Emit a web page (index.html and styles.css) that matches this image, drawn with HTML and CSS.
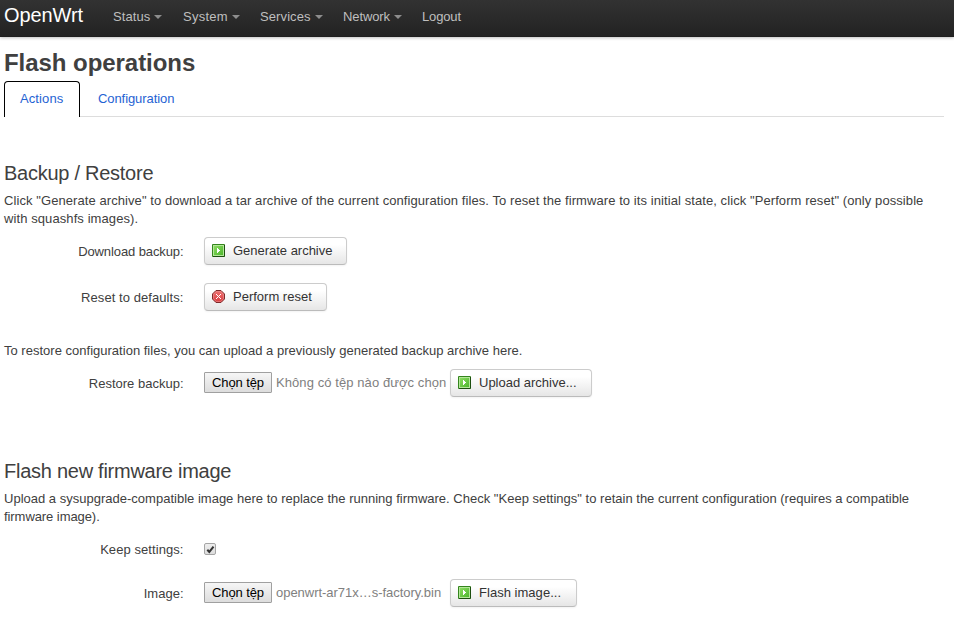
FILE: index.html
```html
<!DOCTYPE html>
<html lang="en">
<head>
<meta charset="utf-8">
<title>OpenWrt - Flash operations</title>
<link rel="stylesheet" href="styles.css">
</head>
<body>
<svg class="sprites" aria-hidden="true">
  <defs>
    <linearGradient id="green" x1="0" y1="0" x2="1" y2="1"><stop offset="0" stop-color="#8ddc62"/><stop offset="1" stop-color="#4cb52c"/></linearGradient>
    <linearGradient id="red" x1="0" y1="0" x2="0" y2="1"><stop offset="0" stop-color="#ee7474"/><stop offset="1" stop-color="#d83a3e"/></linearGradient>
    <symbol id="apply" viewBox="0 0 13 13">
      <rect width="13" height="13" rx="1" fill="#34851d"/>
      <path d="M12 1h1v11l-1 1H1v-1h11z" fill="#1d4f10"/>
      <rect x="1.5" y="1.5" width="10" height="10" fill="url(#green)" stroke="#b4e79a"/>
      <path d="M5 4h1v1h1v1h1v1H7v1H6v1H5z" fill="#fff"/>
    </symbol>
    <symbol id="reset" viewBox="0 0 13 13">
      <path d="M4 .5h5L12.500 4v5L9 12.500H4L.5 9V4z" fill="url(#red)" stroke="#7d2a2a"/>
      <path d="M4.300 1.500h4.400L11.500 4.300v4.400L8.700 11.500H4.300L1.500 8.700V4.300z" fill="none" stroke="#ef9292" stroke-width=".6"/>
      <path d="M4 4h1v1H4zM8 4h1v1H8zM5 5h1v1H5zM7 5h1v1H7zM6 6h1v1H6zM5 7h1v1H5zM7 7h1v1H7zM4 8h1v1H4zM8 8h1v1H8z" fill="#fff"/>
    </symbol>
  </defs>
</svg>
<header class="topbar">
  <a class="brand">OpenWrt</a>
  <nav class="menu">
    <a class="item status">Status<i class="caret"></i></a>
    <a class="item system">System<i class="caret"></i></a>
    <a class="item services">Services<i class="caret"></i></a>
    <a class="item network">Network<i class="caret"></i></a>
    <a class="item logout">Logout</a>
  </nav>
</header>
<main class="content">
  <h2><span class="t-title">Flash operations</span></h2>
  <ul class="tabs">
    <li class="tab active"><span class="t-actions">Actions</span></li>
    <li class="tab"><span class="t-config">Configuration</span></li>
  </ul>
  <section class="backup">
    <h3><span class="t-h-backup">Backup / Restore</span></h3>
    <p class="descr"><span class="t-d1">Click "Generate archive" to download a tar archive of the current configuration files. To reset the firmware to its initial state, click "Perform reset" (only possible</span><br><span class="t-d2">with squashfs images).</span></p>
    <div class="row">
      <label><span class="t-l1">Download backup:</span></label>
      <button class="btn generate"><svg class="icon"><use href="#apply"/></svg><span class="t-b1">Generate archive</span></button>
    </div>
    <div class="row">
      <label><span class="t-l2">Reset to defaults:</span></label>
      <button class="btn perform"><svg class="icon"><use href="#reset"/></svg><span class="t-b2">Perform reset</span></button>
    </div>
    <p class="descr restore"><span class="t-d3">To restore configuration files, you can upload a previously generated backup archive here.</span></p>
    <div class="row">
      <label><span class="t-l3">Restore backup:</span></label>
      <div class="file"><button class="choose"><span class="t-c">Chọn tệp</span></button><span class="filename"><span class="t-f1">Không có tệp nào được chọn</span></span></div>
      <button class="btn upload"><svg class="icon"><use href="#apply"/></svg><span class="t-b3">Upload archive...</span></button>
    </div>
  </section>
  <section class="flash">
    <h3><span class="t-h-flash">Flash new firmware image</span></h3>
    <p class="descr"><span class="t-d4">Upload a sysupgrade-compatible image here to replace the running firmware. Check "Keep settings" to retain the current configuration (requires a compatible</span><br><span class="t-d5">firmware image).</span></p>
    <div class="row keep">
      <label><span class="t-l4">Keep settings:</span></label>
      <span class="check"><svg viewBox="0 0 12 12"><path d="M2.500 6.300L4.700 8.700L9.300 2.800" fill="none" stroke="#333" stroke-width="2.200"/></svg></span>
    </div>
    <div class="row image">
      <label><span class="t-l5">Image:</span></label>
      <div class="file"><button class="choose"><span class="t-c">Chọn tệp</span></button><span class="filename"><span class="t-f2">openwrt-ar71x…s-factory.bin</span></span></div>
      <button class="btn flash-btn"><svg class="icon"><use href="#apply"/></svg><span class="t-b4">Flash image...</span></button>
    </div>
  </section>
</main>
</body>
</html>
```
FILE: styles.css
```css
* { box-sizing: border-box; }
body { margin: 0; background: #fff; color: #404040; font: 13px/18px "Liberation Sans", Arial, sans-serif; overflow: hidden; }
button { font: inherit; margin: 0; }
span { white-space: nowrap; }
.sprites { display: block; width: 0; height: 0; }
.topbar { display: flex; height: 37px; background: linear-gradient(#323232, #222); box-shadow: 0 1px 3px rgba(0,0,0,.25), inset 0 -1px 0 rgba(0,0,0,.1); }
.brand { width: 103px; padding: 5px 0 0 4px; font-size: 20px; line-height: 20px; color: #fff; letter-spacing: -.1px; }
.menu { display: flex; color: #bfbfbf; }
.item { display: flex; padding: 8px 0 0 10px; }
.status { width: 70px; letter-spacing: .1px; }
.system { width: 77px; letter-spacing: .27px; }
.services { width: 83px; letter-spacing: .1px; }
.network { width: 79px; letter-spacing: -.1px; }
.logout { letter-spacing: -.15px; }
.caret { width: 0; height: 0; margin: 7px 0 0 4px; border: 4px solid transparent; border-top-color: #8d8d8d; border-bottom: 0; }
.content { padding: 8px 10px 0 4px; }
h2, h3, p, ul { margin: 0; padding: 0; font-weight: normal; }
h2 { height: 36px; font-size: 24px; line-height: 36px; font-weight: bold; letter-spacing: -.05px; }
h3 { height: 37px; font-size: 20px; line-height: 36px; letter-spacing: -.26px; }
.tabs { display: flex; height: 36px; list-style: none; border-bottom: 1px solid #ddd; color: #1f63d3; }
.tab { height: 36px; margin-right: 2px; padding: 7px 15px 0; line-height: 20px; border: 1px solid transparent; border-bottom: 0; }
.active { width: 76px; border-color: #000; border-radius: 4px 4px 0 0; background: #fff; }
.t-actions { letter-spacing: .1px; }
.t-config { letter-spacing: -.08px; }
.backup { padding-top: 38px; }
.descr { height: 36px; }
.t-d1 { letter-spacing: .079px; }
.t-d2 { letter-spacing: .09px; }
.t-d3 { letter-spacing: .011px; }
.t-d4 { letter-spacing: .008px; }
.t-d5 { letter-spacing: -.07px; }
.row { display: flex; height: 28px; margin: 10px 0 18px; }
.descr + .row { margin-top: 9px; }
label { width: 180px; padding: 6px .5px 0 0; text-align: right; }
.t-l1 { letter-spacing: -.1px; }
.t-l2 { letter-spacing: .07px; }
.t-l4 { letter-spacing: .07px; }
.row > :nth-child(2) { margin-left: 20px; }
.btn { display: flex; align-items: flex-start; height: 28px; padding: 4px 7px 0; border: 1px solid #ccc; border-bottom-color: #bbb; border-radius: 4px; background: linear-gradient(#fff 25%, #e6e6e6); color: #333; box-shadow: inset 0 1px 0 rgba(255,255,255,.2), 0 1px 2px rgba(0,0,0,.05); }
.icon { width: 13px; height: 13px; margin: 2px 8px 0 0; flex: none; }
.generate { width: 143px; letter-spacing: -.02px; }
.perform { width: 123px; }
.upload { width: 142px; }
.flash-btn { width: 127px; letter-spacing: .03px; }
.restore { height: 18px; margin-top: 31px; }
.file { display: flex; width: 246px; padding-top: 3px; }
.choose { width: 68px; height: 21px; padding: 0; border: 1px solid #a0a0a0; border-radius: 1px; background: linear-gradient(#f6f6f6, #ddd); color: #000; line-height: 18px; letter-spacing: -.1px; }
.filename { margin-left: 4px; padding-top: 2px; color: #808080; }
.t-f1 { letter-spacing: .08px; }
.t-f2 { letter-spacing: -.03px; }
.flash { padding-top: 38px; }
.keep { margin-bottom: 16px; }
.check { width: 12px; height: 12px; margin-top: 8px; border: 1px solid #a5a5a5; border-radius: 2px; background: linear-gradient(#eee, #ddd); }
.check svg { display: block; width: 11px; height: 11px; }
```
